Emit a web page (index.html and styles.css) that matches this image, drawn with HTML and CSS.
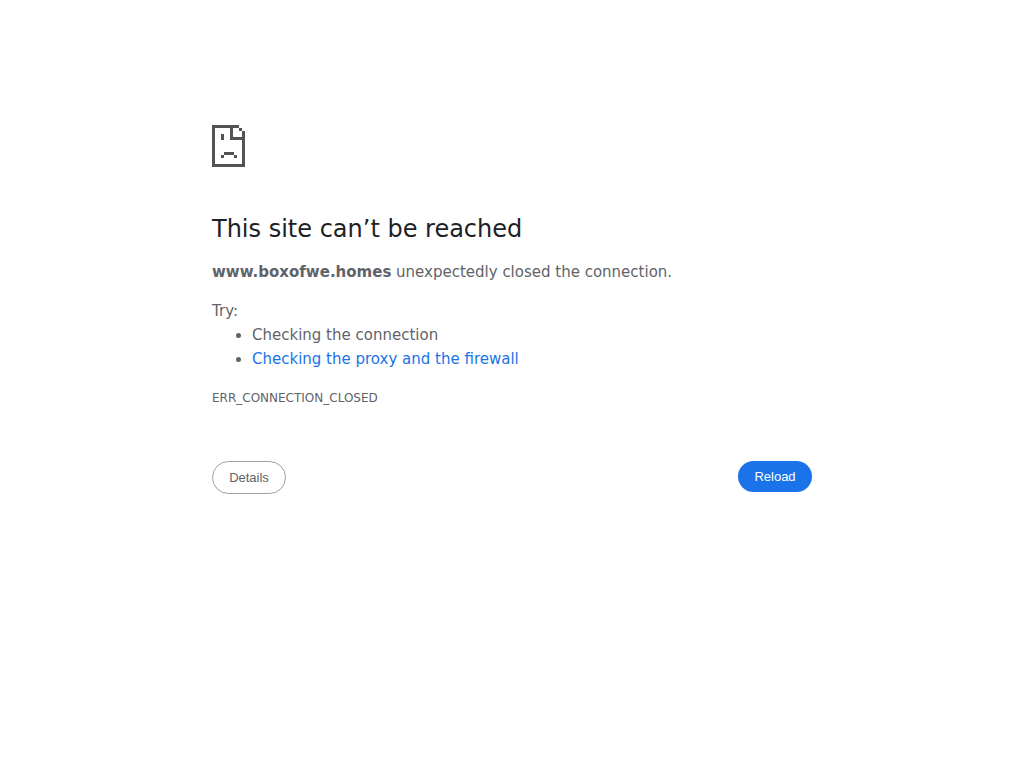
FILE: index.html
```html
<!DOCTYPE html>
<html lang="en">
    <head>
        <meta charset="utf-8">
        <meta name="viewport" content="width=device-width, initial-scale=1">
        <title>www.boxofwe.homes</title>
        <link rel="stylesheet" href="styles.css">
    </head>
    <body>
        <main class="interstitial">
            <svg class="icon" viewBox="0 0 33 42" shape-rendering="crispEdges" aria-hidden="true">
                <!-- page outline with the folded corner -->
                <path d="M0 0h27v3H3v36h27V15H18V3h3v9h9V6h3v36H0z"/>
                <path d="M27 3h3v3h-3z"/>
                <!-- face -->
                <path d="M9 9h3v6H9zM12 27h10v3H12zM9 30h3v3H9zM22 30h3v3h-3z"/>
            </svg>
            <h1>This site can’t be reached</h1>
            <p><strong>www.boxofwe.homes</strong> unexpectedly closed the connection.</p>
            <div class="suggestions">
                <p>Try:</p>
                <ul>
                    <li>Checking the connection</li>
                    <li><a href="#buttons">Checking the proxy and the firewall</a></li>
                </ul>
            </div>
            <div class="error-code">ERR_CONNECTION_CLOSED</div>
            <div id="buttons" class="buttons">
                <button type="button" class="reload">Reload</button>
                <button type="button" class="details">Details</button>
            </div>
        </main>
    </body>
</html>
```

FILE: styles.css
```css
body {
    margin: 0;
    background: #fff;
    color: #5f6368;
    font-family: "DejaVu Sans", sans-serif;
    font-size: 15px;
    line-height: 24px;
}
.interstitial {
    box-sizing: border-box;
    max-width: 600px;
    margin: 0 auto;
    padding-top: 125px;
}
.icon {
    display: block;
    width: 33px;
    height: 42px;
    fill: #535353;
}
h1 {
    margin: 47px 0 16px;
    color: #202124;
    font-size: 24px;
    font-weight: 500;
    line-height: 30px;
}
p {
    margin: 0;
}
.suggestions {
    margin-top: 15px;
}
ul {
    margin: 0;
    padding-left: 40px;
}
a {
    color: #1a73e8;
    text-decoration: none;
}
.error-code {
    margin-top: 15px;
    font-size: 12px;
}
.buttons {
    display: flex;
    flex-direction: row-reverse;
    align-items: flex-start;
    justify-content: space-between;
    margin-top: 51px;
}
button {
    min-width: 74px;
    padding: 8px 16px;
    border: 0;
    border-radius: 20px;
    font-family: "Liberation Sans", sans-serif;
    font-size: 13px;
    line-height: 15px;
    cursor: pointer;
}
.reload {
    background: #1a73e8;
    color: #fff;
}
.details {
    border: 1px solid #9aa0a6;
    background: #fff;
    color: #5f6368;
}
```
